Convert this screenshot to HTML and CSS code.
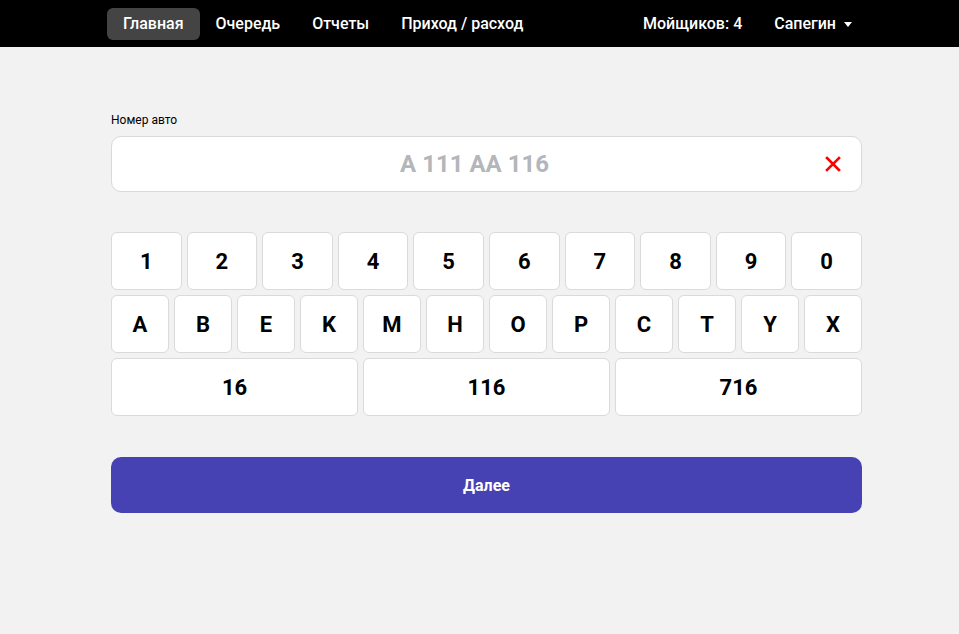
FILE: index.html
```html
<!DOCTYPE html>
<html lang="ru">
<head>
<meta charset="utf-8">
<title>Главная</title>
<link rel="stylesheet" href="styles.css">
</head>
<body>
<header class="topbar">
  <nav class="topbar-inner">
    <ul class="nav-list">
      <li><a class="nav-link active" href="#">Главная</a></li>
      <li><a class="nav-link" href="#">Очередь</a></li>
      <li><a class="nav-link" href="#">Отчеты</a></li>
      <li><a class="nav-link" href="#">Приход / расход</a></li>
    </ul>
    <ul class="nav-list nav-right">
      <li><span class="nav-link">Мойщиков: 4</span></li>
      <li><a class="nav-link dropdown" href="#">Сапегин<span class="caret"></span></a></li>
    </ul>
  </nav>
</header>
<main class="container">
  <label class="field-label" for="plate">Номер авто</label>
  <div class="plate-input">
    <input id="plate" type="text" placeholder="A 111 AA 116">
    <button class="clear-btn" type="button" aria-label="Очистить">
      <svg width="16" height="16" viewBox="0 0 16 16"><path d="M2 2 L14 14 M14 2 L2 14" stroke="#ff0000" stroke-width="2.6" stroke-linecap="square"/></svg>
    </button>
  </div>
  <div class="keyboard">
    <div class="key-row">
      <button class="key">1</button><button class="key">2</button><button class="key">3</button><button class="key">4</button><button class="key">5</button><button class="key">6</button><button class="key">7</button><button class="key">8</button><button class="key">9</button><button class="key">0</button>
    </div>
    <div class="key-row">
      <button class="key">A</button><button class="key">B</button><button class="key">E</button><button class="key">K</button><button class="key">M</button><button class="key">H</button><button class="key">O</button><button class="key">P</button><button class="key">C</button><button class="key">T</button><button class="key">Y</button><button class="key">X</button>
    </div>
    <div class="key-row">
      <button class="key">16</button><button class="key">116</button><button class="key">716</button>
    </div>
  </div>
  <button class="next-btn" type="button">Далее</button>
</main>
</body>
</html>
```

FILE: styles.css
```css
* { box-sizing: border-box; }
html, body { margin: 0; padding: 0; }
body {
  background: #f2f2f2;
  font-family: Roboto, "Noto Sans", "Liberation Sans", sans-serif;
  color: #000;
  min-height: 634px;
}
.topbar {
  background: #000;
  height: 47px;
}
.topbar-inner {
  margin-left: 107px;
  width: 761px;
  height: 47px;
  display: flex;
  align-items: center;
  justify-content: space-between;
}
.nav-list {
  list-style: none;
  margin: 0;
  padding: 0;
  display: flex;
  align-items: center;
}
.nav-link {
  display: flex;
  align-items: center;
  height: 32px;
  padding: 0 16px;
  border-radius: 6px;
  color: #fff;
  text-decoration: none;
  font-size: 16px;
  font-weight: 500;
  white-space: nowrap;
}
.nav-link.active { background: #444; }
.caret {
  display: inline-block;
  margin-left: 8px;
  width: 0; height: 0;
  border-left: 4.5px solid transparent;
  border-right: 4.5px solid transparent;
  border-top: 5px solid #fff;
  margin-top: 1px;
}
.container {
  margin-left: 111px;
  width: 751px;
  padding-top: 65px;
}
.field-label {
  display: block;
  font-size: 12px;
  line-height: 16px;
  margin-bottom: 8px;
}
.plate-input {
  position: relative;
  height: 56px;
  background: #fff;
  border: 1px solid #d9d9d9;
  border-radius: 10px;
}
.plate-input input {
  width: 100%;
  height: 100%;
  border: 0;
  background: transparent;
  outline: none;
  text-align: center;
  font-family: inherit;
  font-size: 24px;
  font-weight: 700;
  color: #000;
  padding: 0 50px 1px 26px;
}
.plate-input input::placeholder { color: #b3b6ba; opacity: 1; }
.clear-btn {
  position: absolute;
  right: 20px;
  top: 50%;
  transform: translateY(-50%);
  border: 0;
  background: none;
  padding: 0;
  width: 16px;
  height: 16px;
  display: flex;
  cursor: pointer;
}
.keyboard {
  margin-top: 40px;
  display: flex;
  flex-direction: column;
  gap: 5px;
}
.key-row {
  display: flex;
  gap: 5px;
}
.key {
  flex: 1 1 0;
  min-width: 0;
  height: 58px;
  background: #fff;
  border: 1px solid #dadada;
  border-radius: 6px;
  font-family: inherit;
  font-size: 22px;
  font-weight: 700;
  color: #000;
  padding: 0;
}
.next-btn {
  margin-top: 41px;
  width: 100%;
  height: 56px;
  border: 0;
  border-radius: 10px;
  background: #4742b3;
  color: #fff;
  font-family: inherit;
  font-size: 16px;
  font-weight: 700;
}
```
